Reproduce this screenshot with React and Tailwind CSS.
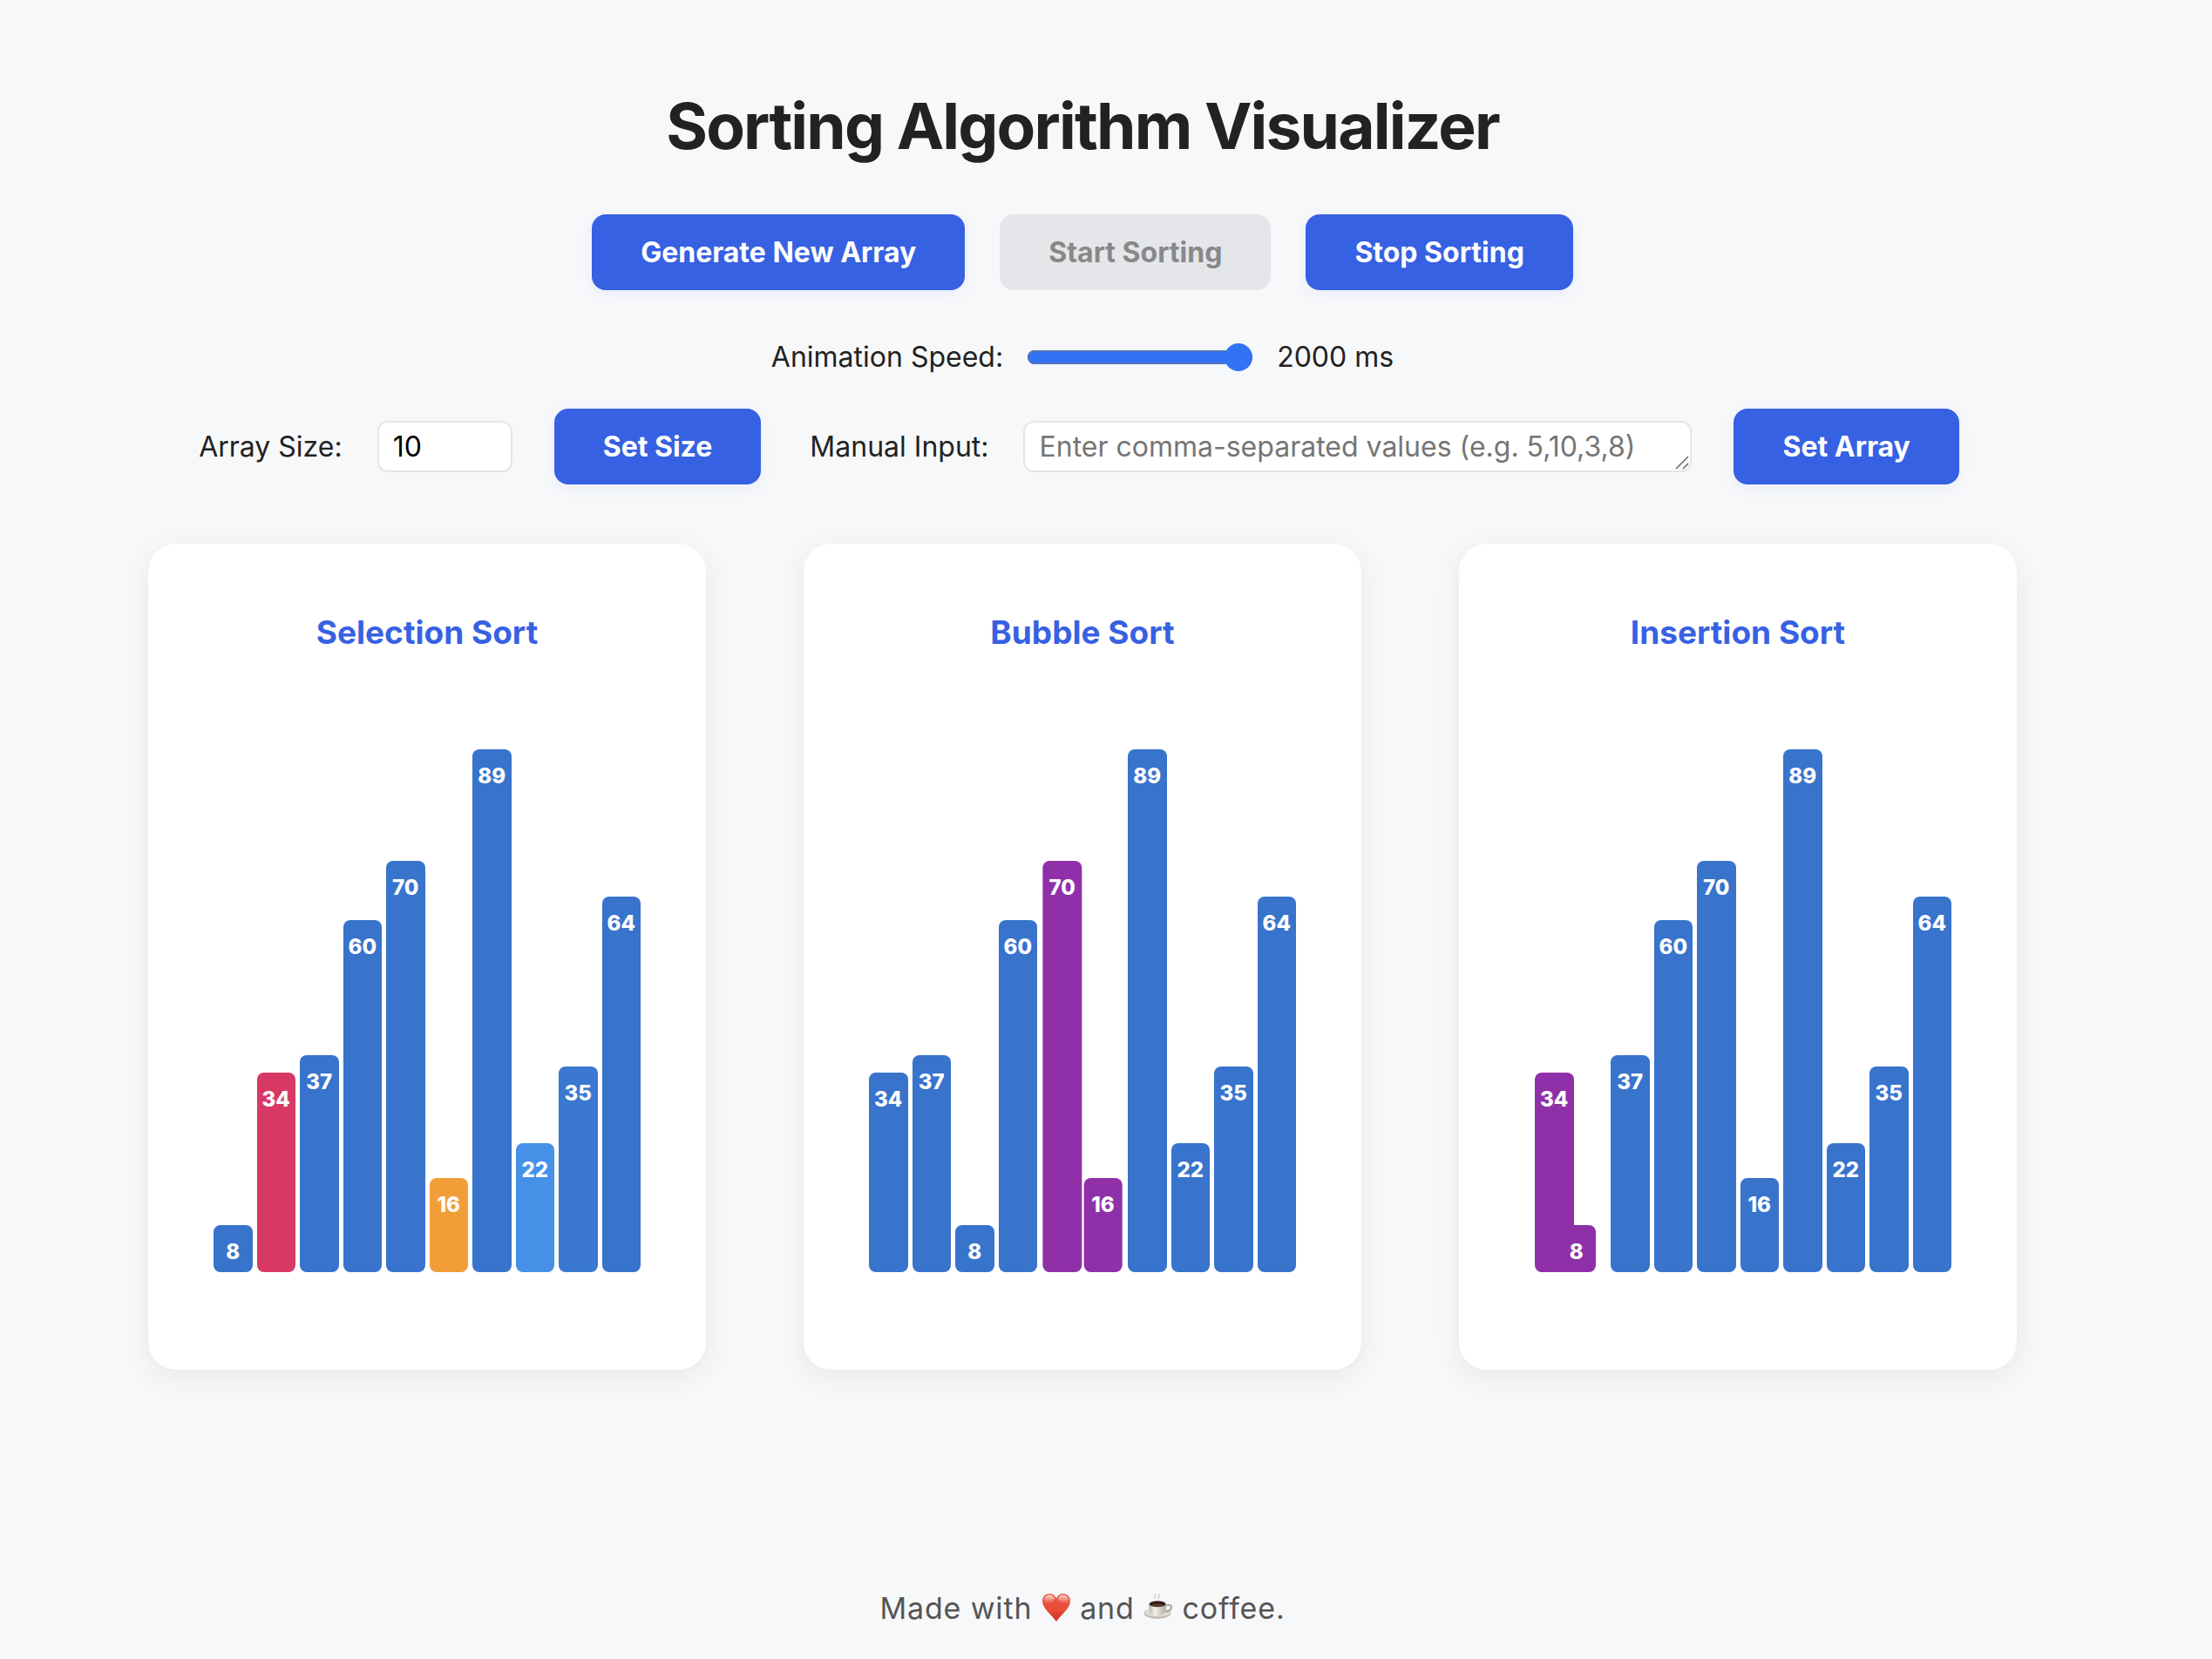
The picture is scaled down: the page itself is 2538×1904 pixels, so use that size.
import React, { useState } from "react";

const MAX_VALUE = 89;

const TONES = {
  base: "bg-[#3873cc]",
  fading: "bg-[#3a78d1]",
  scanning: "bg-[#4690e8]",
  candidate: "bg-[#f19e38]",
  current: "bg-[#d73964]",
  swapping: "bg-[#8f30a8]",
};

// shift: how far a bar has moved toward its neighbour's slot (1 = a full slot)
const CHARTS = [
  {
    title: "Selection Sort",
    bars: [
      { value: 8 },
      { value: 34, tone: "current" },
      { value: 37 },
      { value: 60 },
      { value: 70 },
      { value: 16, tone: "candidate" },
      { value: 89 },
      { value: 22, tone: "scanning" },
      { value: 35, tone: "fading" },
      { value: 64 },
    ],
  },
  {
    title: "Bubble Sort",
    bars: [
      { value: 34 },
      { value: 37 },
      { value: 8 },
      { value: 60 },
      { value: 70, tone: "swapping", shift: 0.03 },
      { value: 16, tone: "swapping", shift: -0.03 },
      { value: 89 },
      { value: 22 },
      { value: 35 },
      { value: 64 },
    ],
  },
  {
    title: "Insertion Sort",
    bars: [
      { value: 34, tone: "swapping", shift: 0.27 },
      { value: 8, tone: "swapping", shift: -0.27 },
      { value: 37 },
      { value: 60 },
      { value: 70 },
      { value: 16 },
      { value: 89 },
      { value: 22 },
      { value: 35 },
      { value: 64 },
    ],
  },
];

function Button({ children, disabled }) {
  return (
    <button
      type="button"
      disabled={disabled}
      className="rounded-2xl bg-[#3761e3] px-14 py-6 text-[32px] leading-[39px] font-bold whitespace-nowrap text-white shadow-[0_4px_16px_rgba(55,97,227,0.08)] disabled:bg-[#e5e6ea] disabled:text-[#888888] disabled:shadow-none"
    >
      {children}
    </button>
  );
}

function Bar({ value, tone = "base", shift = 0 }) {
  return (
    <div
      className={`flex-1 rounded-lg pt-[18px] text-center text-2xl leading-[26px] font-extrabold text-white ${TONES[tone]}`}
      style={{
        height: `${(value / MAX_VALUE) * 100}%`,
        transform: shift ? `translateX(${shift * 100}%)` : undefined,
      }}
    >
      {value}
    </div>
  );
}

function SortCard({ title, bars }) {
  return (
    <section className="flex max-w-[640px] flex-1 flex-col items-center rounded-[32px] bg-white px-16 pt-20 pb-28 shadow-[0_8px_32px_rgba(0,0,0,0.07)]">
      <h2 className="text-[37px] leading-[44px] font-bold text-[#3761e3]">{title}</h2>
      <div className="mt-28 flex h-[600px] w-full max-w-[490px] items-end gap-[5px]">
        {bars.map((bar) => (
          <Bar key={bar.value} {...bar} />
        ))}
      </div>
    </section>
  );
}

function Heart() {
  return (
    <svg viewBox="0 0 34 34" className="inline-block size-[34px] align-[-4px]" role="img" aria-label="love">
      <defs>
        <linearGradient id="heartFill" x1="0" y1="0" x2="0" y2="1">
          <stop offset="0" stopColor="#ee5a48" />
          <stop offset="0.6" stopColor="#e94a36" />
          <stop offset="1" stopColor="#c92a1c" />
        </linearGradient>
        <linearGradient id="heartShine" x1="0" y1="0" x2="0" y2="1">
          <stop offset="0" stopColor="#fff" stopOpacity="0.75" />
          <stop offset="1" stopColor="#fff" stopOpacity="0" />
        </linearGradient>
      </defs>
      <path d="M17 33C14 27 1 19 1 9.500C1 4.500 4.600 1 9 1c3.600 0 6.600 2 8 5.400C18.400 3 21.400 1 25 1c4.400 0 8 3.500 8 8.500C33 19 20 27 17 33z" fill="url(#heartFill)" />
      <path d="M3 8.500C3 5 5.600 2.400 9 2.400c3 0 5.400 1.700 6.300 4.600C13 12 6 13 3.200 11z" fill="url(#heartShine)" />
      <path d="M31 8.500C31 5 28.400 2.400 25 2.400c-3 0-5.400 1.700-6.300 4.600C21 12 28 13 30.800 11z" fill="url(#heartShine)" />
    </svg>
  );
}

function Coffee() {
  return (
    <svg viewBox="0 0 34 34" className="inline-block size-[34px] align-[-4px]" role="img" aria-label="hot">
      <defs>
        <linearGradient id="cupFill" x1="0" y1="0" x2="1" y2="0">
          <stop offset="0" stopColor="#b3afa6" />
          <stop offset="0.35" stopColor="#f3f1ec" />
          <stop offset="1" stopColor="#a8a49a" />
        </linearGradient>
      </defs>
      <ellipse cx="16" cy="23.500" rx="15.500" ry="6.500" fill="#c3bfb5" />
      <ellipse cx="16" cy="22.500" rx="14.500" ry="5" fill="#dedbd3" />
      <path d="M25 15c4-2 7.500-1 7 2-.5 3-4.500 4.500-8.500 4.500" fill="none" stroke="#aaa69c" strokeWidth="2" />
      <path d="M6 12.500c0 6.500 2 11.500 6 13.500h8c4-2 6.200-7 6.200-13.500z" fill="url(#cupFill)" />
      <ellipse cx="16.100" cy="12.600" rx="10.100" ry="3.900" fill="#dedad2" />
      <ellipse cx="16.100" cy="12.900" rx="9.300" ry="3.300" fill="#2f1c14" />
      <ellipse cx="16.100" cy="14" rx="6.500" ry="1.600" fill="#5a3a28" />
      <path d="M13.500 7c-2-2 1-3 0-5.500M17.500 7c-2-2 2-3 0-6" fill="none" stroke="#c9cbce" strokeWidth="1.400" />
    </svg>
  );
}

export default function App() {
  const [speed, setSpeed] = useState(2000);
  const [size, setSize] = useState(10);
  const [values, setValues] = useState("");

  return (
    <div className="flex min-h-screen flex-col items-center bg-[#f7f8fa] pt-[100px] pr-[54px] font-['Inter',sans-serif] text-[32px] leading-[39px] text-[#222222]">
      <h1 className="text-[73px] leading-[90px] font-bold tracking-tight">Sorting Algorithm Visualizer</h1>

      <div className="mt-14 flex flex-wrap justify-center gap-10">
        <Button>Generate New Array</Button>
        <Button disabled>Start Sorting</Button>
        <Button>Stop Sorting</Button>
      </div>

      <div className="mt-[57px] flex items-center gap-7">
        <label htmlFor="speed">Animation Speed:</label>
        <input
          id="speed"
          type="range"
          min="100"
          max="2000"
          value={speed}
          onChange={(e) => setSpeed(Number(e.target.value))}
          className="h-8 w-[258px] appearance-none bg-transparent [&::-webkit-slider-runnable-track]:h-4 [&::-webkit-slider-runnable-track]:rounded-full [&::-webkit-slider-runnable-track]:bg-[#3273f6] [&::-webkit-slider-runnable-track]:shadow-[inset_0_0_0_2px_#4f74bd] [&::-webkit-slider-thumb]:-mt-2 [&::-webkit-slider-thumb]:size-8 [&::-webkit-slider-thumb]:appearance-none [&::-webkit-slider-thumb]:rounded-full [&::-webkit-slider-thumb]:bg-[#3273f6]"
        />
        <output htmlFor="speed">{speed} ms</output>
      </div>

      <div className="mt-10 flex flex-wrap justify-center gap-12">
        <div className="mr-2 flex items-center">
          <label htmlFor="size">Array Size:</label>
          <input
            id="size"
            type="text"
            inputMode="numeric"
            value={size}
            onChange={(e) => setSize(e.target.value)}
            className="mr-12 ml-10 h-[59px] w-[155px] rounded-xl border-2 border-[#e5e6ea] bg-white px-4 text-black"
          />
          <Button>Set Size</Button>
        </div>
        <div className="mr-2 flex items-center">
          <label htmlFor="values">Manual Input:</label>
          <div className="relative mr-12 ml-10">
            <textarea
              id="values"
              rows={1}
              value={values}
              onChange={(e) => setValues(e.target.value)}
              placeholder="Enter comma-separated values (e.g. 5,10,3,8)"
              className="block h-[59px] w-[767px] resize-none overflow-hidden rounded-xl border-2 border-[#e5e6ea] bg-white px-4 py-2 placeholder:text-[#757575]"
            />
            <svg viewBox="0 0 16 16" className="pointer-events-none absolute right-[3px] bottom-[3px] size-4" aria-hidden="true">
              <path d="M1 15L15 1M9 15l6-6" stroke="#666" strokeWidth="1.500" />
            </svg>
          </div>
          <Button>Set Array</Button>
        </div>
      </div>

      <main className="mt-[68px] flex w-full justify-center gap-28 px-16">
        {CHARTS.map((chart) => (
          <SortCard key={chart.title} {...chart} />
        ))}
      </main>

      <footer className="mt-auto pb-[38px] text-[34px] leading-[41px] tracking-wide text-[#555555]">
        Made with <Heart /> and <Coffee /> coffee.
      </footer>
    </div>
  );
}
